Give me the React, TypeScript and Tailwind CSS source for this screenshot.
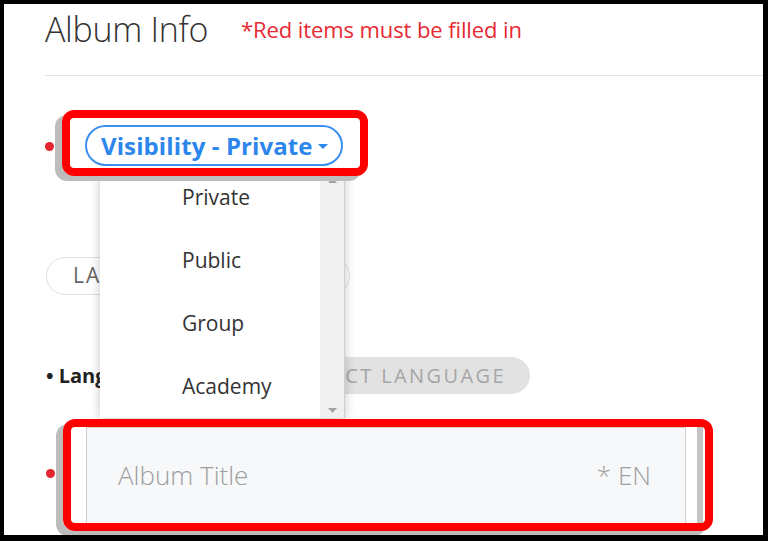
import React from "react";

export default function App() {
  const items = ["Private", "Public", "Group", "Academy"];
  return (
    <div className="w-[768px] h-[541px] bg-black pl-[4px] pt-[4px] pr-[5px] pb-[6px]">
      <div className="relative w-full h-full bg-white overflow-hidden font-['Open_Sans',sans-serif]">
        {/* Header */}
        <div className="ml-[41px] h-[72px] border-b border-[#e3e3e3] flex items-start pt-[2px]">
          <span className="text-[34px] leading-[46px] font-light text-[#333] tracking-[-0.3px]">Album Info</span>
          <span className="ml-[33px] text-[22px] leading-[46px] text-[#e62a33] mt-[0px] tracking-[-0.1px]">*Red items must be filled in</span>
        </div>

        {/* Visibility row */}
        <div className="mt-[34px] ml-[41px] flex items-center">
          <div className="w-[9px] h-[9px] rounded-full bg-[#e6262f] mt-[6px]" />
          <div className="relative z-20 ml-[8px] w-[306px] h-[66px] border-[8px] border-[#ff0000] rounded-[12px] shadow-[-7px_5px_0_0_#bdbdbd] pl-[15px] pt-[7px]">
            <div className="w-[258px] h-[41px] rounded-full border-2 border-[#3b8ff0] flex items-center pl-[14px] text-[#2d86ec] font-bold text-[24px] leading-none">
              <span className="tracking-[0.1px]">Visibility - Private</span>
              <svg width="10" height="6" viewBox="0 0 10 6" className="ml-[5px] mt-[3px]">
                <path d="M0 0 L10 0 L5 5 Z" fill="#2d86ec" />
              </svg>
            </div>
          </div>
        </div>

        {/* Language pill */}
        <div className="mt-[81px] ml-[42px] w-[304px] h-[38px] rounded-full border border-[#e0e0e0] flex items-center pl-[26px] text-[21px] tracking-[2px] text-[#666]">
          LANGUAGE SETTING
        </div>

        {/* Language row */}
        <div className="mt-[62px] ml-[42px] w-[484px] flex items-center">
          <span className="text-[20px] font-bold text-[#222]">• Language</span>
          <div className="ml-auto h-[37px] rounded-full bg-[#e2e2e2] flex items-center pl-[25px] pr-[24px] text-[20px] tracking-[2.4px] text-[#a6a6a6]">
            SELECT LANGUAGE
          </div>
        </div>

        {/* Album title row */}
        <div className="mt-[25px] ml-[42px] flex items-start">
          <div className="w-[9px] h-[9px] rounded-full bg-[#e6262f] mt-[50px]" />
          <div className="relative z-20 ml-[8px] w-[650px] h-[112px] border-[8px] border-[#ff0000] rounded-[12px] shadow-[-7px_5px_0_0_#bdbdbd] pl-[15px] flex">
            <div className="w-[600px] h-[96px] bg-[#f7f8fa] border border-[#cfcfcf] border-b-0 flex items-start pt-[28px] pl-[31px] pr-[34px] text-[26px] text-[#9e9e9e] font-light">
              <span>Album Title</span>
              <span className="ml-auto">* EN</span>
            </div>
            <div className="ml-[11px] w-[6px] h-full bg-[#c4c4c4]" />
          </div>
        </div>

        {/* Dropdown menu */}
        <div className="absolute z-10 left-[96px] top-[169px] w-[245px] h-[245px] bg-white shadow-[0_2px_10px_rgba(0,0,0,0.22)] border-r border-[#cfcfcf] overflow-hidden flex">
          <div className="flex-1 -mt-[7px] flex flex-col">
            {items.map((it) => (
              <div key={it} className="h-[63px] shrink-0 flex items-center pl-[82px] text-[21px] text-[#333]">
                {it}
              </div>
            ))}
          </div>
          <div className="w-[24px] h-full bg-[#f0f0f0] flex flex-col items-center justify-between py-[5px]">
            <svg width="9" height="5" viewBox="0 0 9 5"><path d="M0 5 L9 5 L4.5 0 Z" fill="#a3a3a3" /></svg>
            <svg width="9" height="5" viewBox="0 0 9 5"><path d="M0 0 L9 0 L4.5 5 Z" fill="#a3a3a3" /></svg>
          </div>
        </div>
      </div>
    </div>
  );
}
